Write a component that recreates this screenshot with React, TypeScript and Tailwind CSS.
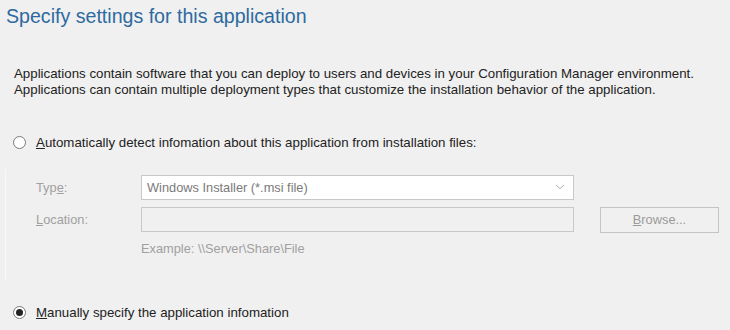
import { ChevronDown } from "lucide-react";

const Radio = ({ checked }: { checked?: boolean }) => (
  <span className="flex h-[13px] w-[13px] items-center justify-center rounded-full border border-[#7a7a7a] bg-white">
    {checked && <span className="h-[7px] w-[7px] rounded-full bg-[#222]" />}
  </span>
);

export default function App() {
  return (
    <div className="h-[330px] w-[730px] overflow-hidden bg-[#f0f0f0] font-['Liberation_Sans',Arial,sans-serif] text-[#222]">
      <h1 className="pl-[6px] pt-[3px] text-[19.6px] leading-[26px] text-[#2e6aa0]">
        Specify settings for this application
      </h1>

      <div className="mt-[37px] pl-[14px] text-[13.3px] leading-[16px]">
        <p>
          Applications contain software that you can deploy to users and devices in your Configuration Manager environment.
        </p>
        <p>Applications can contain multiple deployment types that customize the installation behavior of the application.</p>
      </div>

      <label className="mt-[35px] flex items-center gap-[10px] pl-[13px] text-[13.3px]">
        <Radio />
        <span>
          <u>A</u>utomatically detect infomation about this application from installation files:
        </span>
      </label>

      <div className="ml-[5px] mt-[16px] h-[111px] border-l border-[#f8f8f8] pt-[6px] text-[12.8px] text-[#a0a0a0]">
        <div className="flex items-center">
          <span className="w-[135px] pl-[30px]">
            Typ<u>e</u>:
          </span>
          <div className="flex h-[25px] w-[433px] items-center justify-between border border-[#c8c8c8] bg-white pl-[5px] pr-[6px] text-[#7a7a7a]">
            <span>Windows Installer (*.msi file)</span>
            <ChevronDown size={14} strokeWidth={1.5} className="text-[#9a9a9a]" />
          </div>
        </div>
        <div className="mt-[7px] flex items-center">
          <span className="w-[135px] pl-[30px]">
            <u>L</u>ocation:
          </span>
          <div className="h-[25px] w-[433px] border border-[#c8c8c8] bg-[#f0f0f0]" />
          <div className="ml-[26px] flex h-[26px] w-[119px] items-center justify-center border border-[#c4c4c4] bg-[#f0f0f0] text-[#9a9a9a]">
            <span>
              <u>B</u>rowse...
            </span>
          </div>
        </div>
        <div className="mt-[6px] pl-[135px]">Example: \\Server\Share\File</div>
      </div>

      <label className="mt-[23px] flex items-center gap-[10px] pl-[13px] text-[13.3px]">
        <Radio checked />
        <span>
          <u>M</u>anually specify the application infomation
        </span>
      </label>
    </div>
  );
}
